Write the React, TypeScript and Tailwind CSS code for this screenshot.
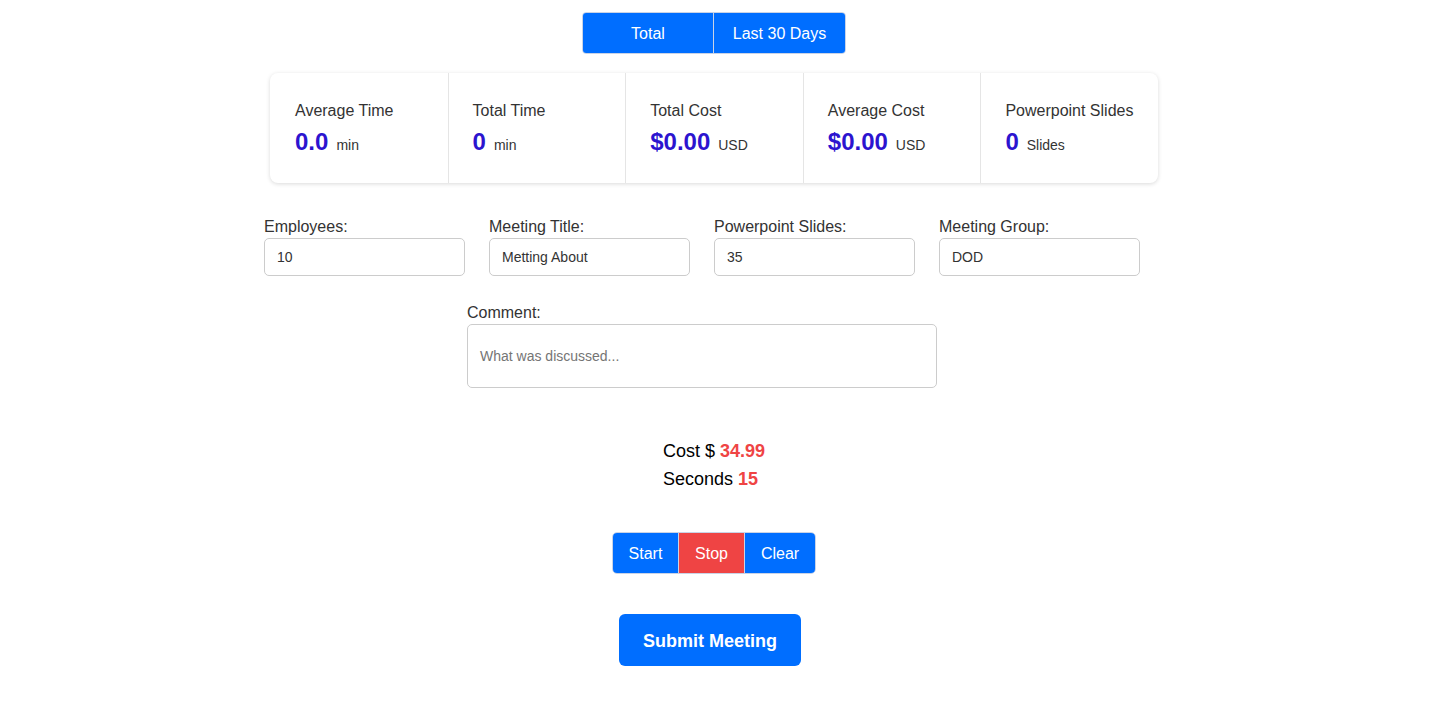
import React from "react";

const stats = [
  { label: "Average Time", value: "0.0", unit: "min" },
  { label: "Total Time", value: "0", unit: "min" },
  { label: "Total Cost", value: "$0.00", unit: "USD" },
  { label: "Average Cost", value: "$0.00", unit: "USD" },
  { label: "Powerpoint Slides", value: "0", unit: "Slides" },
];

const fields = [
  { label: "Employees:", value: "10" },
  { label: "Meeting Title:", value: "Metting About" },
  { label: "Powerpoint Slides:", value: "35" },
  { label: "Meeting Group:", value: "DOD" },
];

export default function App() {
  return (
    <div
      className="min-h-[714px] bg-white flex flex-col items-center pr-[5px] text-[#333]"
      style={{ fontFamily: '"Liberation Sans", Arial, sans-serif' }}
    >
      <div className="mt-[12px] flex rounded-[4px] border border-[#c9d3e6] overflow-hidden">
        <button className="w-[131px] h-[40px] pt-[2px] bg-[#006eff] text-white text-base border-r border-[#c9d3e6]">
          Total
        </button>
        <button className="w-[131px] h-[40px] pt-[2px] bg-[#006eff] text-white text-base">
          Last 30 Days
        </button>
      </div>

      <div className="mt-[19px] w-[888px] flex rounded-[8px] bg-white shadow-[0_1px_4px_rgba(0,0,0,0.15)]">
        {stats.map((s, i) => (
          <div
            key={s.label}
            className={`flex-1 pt-[26px] pb-[25px] ${i === 0 ? "pl-[25px]" : "pl-[24px]"} ${i < stats.length - 1 ? "border-r border-[#e5e5e5]" : ""}`}
          >
            <div className="text-base leading-6 text-[#333]">{s.label}</div>
            <div className="mt-[3px] flex items-baseline leading-8">
              <span className="text-[24px] font-bold text-[#2c14cf]">{s.value}</span>
              <span className="ml-[8px] text-sm text-[#333]">{s.unit}</span>
            </div>
          </div>
        ))}
      </div>

      <div className="mt-[35px] flex">
        {fields.map((f) => (
          <div key={f.label} className="mr-[24px] flex flex-col">
            <label className="text-base leading-[18px] mb-[2px] text-[#333]">{f.label}</label>
            <input
              readOnly
              value={f.value}
              className="w-[201px] h-[38px] rounded-[5px] border border-[#ccc] px-[12px] text-sm text-[#333] outline-none"
            />
          </div>
        ))}
      </div>

      <div className="mt-[28px] mr-[24px] flex flex-col">
        <label className="text-base leading-[18px] mb-[2px] text-[#333]">Comment:</label>
        <textarea
          readOnly
          placeholder="What was discussed..."
          className="w-[470px] h-[64px] rounded-[5px] border border-[#ccc] px-[12px] py-[21px] text-sm leading-[20px] text-[#333] placeholder:text-[#757575] resize-none outline-none"
        />
      </div>

      <div className="mt-[49px] flex flex-col items-start text-[18px] leading-[28px] text-black">
        <div>
          Cost $ <span className="font-bold text-[#ef4444]">34.99</span>
        </div>
        <div>
          Seconds <span className="font-bold text-[#ef4444]">15</span>
        </div>
      </div>

      <div className="mt-[39px] flex rounded-[5px] border border-[#c9d3e6] overflow-hidden">
        <button className="w-[66px] h-[40px] pt-[2px] bg-[#006eff] text-white text-base border-r border-[#c9d3e6]">
          Start
        </button>
        <button className="w-[66px] h-[40px] pt-[2px] bg-[#ef4444] text-white text-base border-r border-[#c9d3e6]">
          Stop
        </button>
        <button className="w-[70px] h-[40px] pt-[2px] bg-[#006eff] text-white text-base">
          Clear
        </button>
      </div>

      <button className="mt-[40px] mr-[8px] w-[182px] h-[52px] pt-[2px] rounded-[6px] bg-[#006eff] text-white text-[18px] font-bold">
        Submit Meeting
      </button>
    </div>
  );
}
